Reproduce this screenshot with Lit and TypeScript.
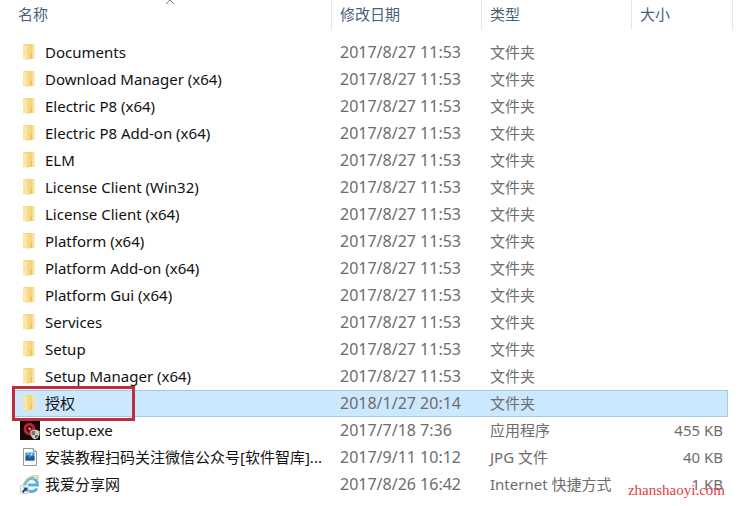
import { LitElement, html, css, svg, nothing } from "lit";
import { customElement, state } from "lit/decorators.js";
import { classMap } from "lit/directives/class-map.js";

type Kind = "folder" | "setup" | "image" | "internet";

interface Entry {
  name: string;
  date: string;
  type: string;
  size?: string;
  kind: Kind;
  marked?: boolean;
}

const folder = (name: string, date = "2017/8/27 11:53", marked = false): Entry => ({
  name,
  date,
  type: "文件夹",
  kind: "folder",
  marked,
});

const entries: Entry[] = [
  folder("Documents"),
  folder("Download Manager (x64)"),
  folder("Electric P8 (x64)"),
  folder("Electric P8 Add-on (x64)"),
  folder("ELM"),
  folder("License Client (Win32)"),
  folder("License Client (x64)"),
  folder("Platform (x64)"),
  folder("Platform Add-on (x64)"),
  folder("Platform Gui (x64)"),
  folder("Services"),
  folder("Setup"),
  folder("Setup Manager (x64)"),
  folder("授权", "2018/1/27 20:14", true),
  { name: "setup.exe", date: "2017/7/18 7:36", type: "应用程序", size: "455 KB", kind: "setup" },
  { name: "安装教程扫码关注微信公众号[软件智库]...", date: "2017/9/11 10:12", type: "JPG 文件", size: "40 KB", kind: "image" },
  { name: "我爱分享网", date: "2017/8/26 16:42", type: "Internet 快捷方式", size: "1 KB", kind: "internet" },
];

const shapes = {
  folder: svg`
    <path d="M3 1h11v15H3z" fill="#f3d47b"/>
    <path d="M3 1l4 1.500V17l-4-1.500z" fill="#fae6a6"/>
    <path d="M7 2.500h3V16l-3 1z" fill="#f6da87"/>
    <path d="M12 1h2.500v15H12z" fill="#f8e09a"/>
    <path d="M10 11l2-1v6h-2z" fill="#ecc566"/>`,
  setup: svg`
    <path d="M0 0h20v19H0z" fill="#150808"/>
    <path d="M13 11.500C10 14 5 12.500 5 8 5 4.500 8 3 10.500 3.500 13.500 4.200 14.500 7.500 13 9H9" fill="none" stroke="#c41f31" stroke-width="3"/>
    <circle cx="9.500" cy="7.500" r="1.300" fill="#e58d8a"/>
    <path d="M15 8.500l4.500 1.500v4q-1 3-4.500 4.500-3.500-1.500-4.500-4.500v-4z" fill="#d9dcc9"/>
    <path d="M15 9.500V14h-3.500v-3.500z" fill="#5577ab"/>
    <path d="M15 9.500l3.500 1V14H15z" fill="#d8cc77"/>
    <path d="M11.500 14H15v3.500q-3-1-3.500-3.500z" fill="#d8cc77"/>
    <path d="M15 14h3.500q-.5 2.500-3.500 3.500z" fill="#4769a3"/>`,
  image: svg`
    <path d="M3.500.5h10l3 3v14h-13z" fill="#fcfdfe" stroke="#929a9d"/>
    <path d="M13.500.5v3h3" fill="#e9edef" stroke="#929a9d"/>
    <path d="M5.500 4.500h9v8h-9z" fill="#3d8fd0"/>
    <path d="M5.500 12.500v-4l2-1.500 2 3 1.500-1.500 1.500-1.500 2 2v3.500z" fill="#1d5b97"/>
    <path d="M7 5.500h2v1H7zM10.500 5.500h2v2h-2z" fill="#cde8fb"/>`,
  internet: svg`
    <path d="M17 13.500C14 18 5.500 17.500 5 10.500 5 6 8 3.500 11.500 3.500c4 0 6 3 6 6.500H8" fill="none" stroke="#55b2df" stroke-width="3"/>
    <path d="M3 14C1 10 7 2 14 .8c4-.8 5 1 3.500 4" fill="none" stroke="#e3cd78" stroke-width="1.500"/>
    <path d="M5 11C8 6 12 3.500 17 2.500" fill="none" stroke="#a0d8ef"/>
    <path d="M.5 10.500h8v8h-8z" fill="#f5f8fb" stroke="#c6d0dc"/>
    <path d="M3 12.500h4.500V17L6 15.500q-2 1-2.500 2.500L2 17q0-2 2.500-3z" fill="#23437f"/>`,
};

@customElement("app-root")
export class FileList extends LitElement {
  @state() private selected = 13;

  static styles = css`
    :host {
      display: block;
      box-sizing: border-box;
      min-height: 100vh;
      padding: 0 12px;
      overflow: hidden;
      background: #fff;
      color: #6d6d6d;
      font: 15px/25px "Noto Sans", "Noto Sans CJK SC", sans-serif;
    }
    table {
      width: 100%;
      table-layout: fixed;
      border-spacing: 0;
    }
    .medium {
      width: 150px;
    }
    .small {
      width: 96px;
    }
    .edge {
      width: 5px;
    }
    th,
    td {
      padding: 0 0 0 8px;
      text-align: left;
      font-weight: 400;
      white-space: nowrap;
    }
    th {
      position: relative;
      height: 28px;
      padding-bottom: 2px;
      border-right: 1px solid #e2e5ea;
      color: #4c607a;
    }
    th:first-child {
      padding-left: 6px;
    }
    th button {
      padding: 0;
      border: 0;
      background: none;
      color: inherit;
      font: inherit;
    }
    .sort {
      position: absolute;
      top: 0;
      left: 48%;
      width: 10px;
      height: 4px;
      fill: none;
      stroke: #777;
    }
    .gap td {
      height: 9px;
      padding: 0;
      line-height: 0;
    }
    .entry td {
      height: 25px;
      border: solid transparent;
      border-width: 1px 0;
    }
    .entry.selected td:not(.edge) {
      border-color: #a3c9e3;
      background: #cce8ff;
    }
    .entry.selected .size {
      border-right: 1px solid #a3c9e3;
    }
    .entry .name {
      position: relative;
      color: #111;
    }
    .entry .date {
      font-size: 16px;
    }
    .label {
      display: flex;
      align-items: center;
      gap: 5px;
    }
    .label svg {
      flex: none;
      width: 20px;
      height: 20px;
    }
    .entry .size {
      position: relative;
      padding-right: 5px;
      text-align: right;
    }
    .entry .edge {
      padding: 0;
    }
    .mark {
      position: absolute;
      top: -5px;
      left: 0;
      box-sizing: border-box;
      width: 123px;
      height: 35px;
      border: 3px solid #bf2d3c;
      pointer-events: none;
    }
    .watermark {
      position: absolute;
      right: 3px;
      bottom: -5px;
      color: #e0403f;
      font: 15px/24px "Liberation Serif", serif;
    }
  `;

  private row(entry: Entry, index: number) {
    const last = index === entries.length - 1;
    return html`<tr
      class=${classMap({ entry: true, selected: index === this.selected })}
      @click=${() => (this.selected = index)}
    >
      <td class="name">
        <div class="label">
          <svg viewBox="0 0 20 20" aria-hidden="true">${shapes[entry.kind]}</svg>
          <span>${entry.name}</span>
        </div>
        ${entry.marked ? html`<div class="mark"></div>` : nothing}
      </td>
      <td class="date">${entry.date}</td>
      <td>${entry.type}</td>
      <td class="size">
        ${entry.size ?? nothing}${last ? html`<span class="watermark">zhanshaoyi.com</span>` : nothing}
      </td>
      <td class="edge"></td>
    </tr>`;
  }

  render() {
    return html`<table>
      <colgroup>
        <col />
        <col class="medium" />
        <col class="medium" />
        <col class="small" />
        <col class="edge" />
      </colgroup>
      <thead>
        <tr>
          <th>
            <button>名称</button>
            <svg class="sort" viewBox="0 0 10 4" aria-hidden="true"><path d="M1 4l4-4 4 4" /></svg>
          </th>
          <th><button>修改日期</button></th>
          <th><button>类型</button></th>
          <th colspan="2"><button>大小</button></th>
        </tr>
      </thead>
      <tbody>
        <tr class="gap"><td colspan="5"></td></tr>
        ${entries.map((entry, index) => this.row(entry, index))}
      </tbody>
    </table>`;
  }
}
